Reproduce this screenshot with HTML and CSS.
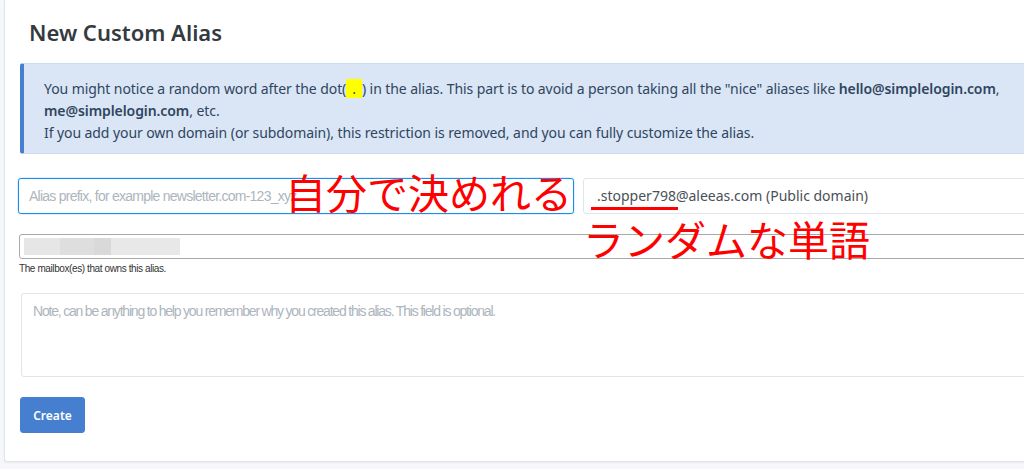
FILE: index.html
```html
<!DOCTYPE html>
<html lang="ja">
<head>
  <meta charset="UTF-8">
  <meta name="viewport" content="width=device-width, initial-scale=1.0">
  <title>New Custom Alias</title>
  <link rel="stylesheet" href="styles.css">
</head>
<body>
  <div class="card">
    <h1 class="card-title">New Custom Alias</h1>

    <div class="alert">
      You might notice a random word after the dot(<span class="mark">.</span>) in the alias. This part is to avoid a person taking all the "nice" aliases like <b>hello@simplelogin.com</b>, <b>me@simplelogin.com</b>, etc.<br>
      If you add your own domain (or subdomain), this restriction is removed, and you can fully customize the alias.
    </div>

    <form class="alias-form">
      <div class="alias-row">
        <input type="text" class="prefix" placeholder="Alias prefix, for example newsletter.com-123_xyz">
        <div class="suffix">
          <span class="word">.stopper798</span>@aleeas.com (Public domain)
        </div>
        <span class="note note-self">自分で決めれる</span>
        <span class="note note-random">ランダムな単語</span>
      </div>

      <div class="mailbox">
        <span class="blur b1"></span><span class="blur b2"></span><span class="blur b3"></span><span class="blur b4"></span>
      </div>
      <div class="help">The mailbox(es) that owns this alias.</div>

      <textarea class="memo" placeholder="Note, can be anything to help you remember why you created this alias. This field is optional."></textarea>

      <button type="button" class="btn">Create</button>
    </form>
  </div>
</body>
</html>
```

FILE: styles.css
```css
* {
  box-sizing: border-box;
}
body {
  margin: 0;
  background-color: #f5f7fb;
  font-family: 'Segoe UI', 'Noto Sans', sans-serif;
  color: #495057;
  overflow: hidden;
  height: 469px;
}

.card {
  margin-left: 4px;
  width: 1060px;
  height: 462px;
  background: #fff;
  border: 1px solid rgba(0, 40, 100, .12);
  border-top: 0;
  border-radius: 0 0 3px 3px;
  box-shadow: 0 1px 2px rgba(0, 0, 0, .05);
  padding: 19px 15px 0 15px;
}

.card-title {
  margin: 0 0 18px 9px;
  font-size: 22px;
  font-weight: 600;
  color: #343a40;
  line-height: 26px;
}

.alert {
  background-color: #dae5f5;
  border: 1px solid #cbdbf2;
  border-left: 4px solid #467fcf;
  border-radius: 3px;
  padding: 14px 20px;
  font-size: 14px;
  line-height: 22px;
  letter-spacing: -0.08px;
  color: #2f4560;
  height: 91px;
  margin-bottom: 24px;
}

.alert b {
  font-weight: 600;
}

.mark {
  background: #ffff00;
  padding: 0 6px;
}

.alias-row {
  position: relative;
  display: flex;
  gap: 9px;
  margin-left: -2px;
  margin-bottom: 20px;
}

.prefix {
  width: 556px;
  height: 36px;
  border: 1px solid #1991eb;
  border-radius: 3px;
  padding: 6px 10px;
  font-family: 'Liberation Sans', sans-serif;
  font-size: 14px;
  letter-spacing: -0.75px;
  outline: none;
  box-shadow: 0 0 0 1px rgba(25, 145, 235, .15);
}

.prefix::placeholder {
  color: #adb5bd;
}

.suffix {
  flex: 1;
  height: 36px;
  border: 1px solid #e0e5ec;
  border-radius: 3px;
  padding: 7px 13px;
  font-size: 14px;
  color: #495057;
  line-height: 20px;
}

.word {
  position: relative;
}

.word::after {
  content: "";
  position: absolute;
  left: -6px;
  width: 87px;
  bottom: -5px;
  height: 3px;
  background: #ff0000;
}

.note {
  position: absolute;
  font-family: 'Noto Sans CJK JP', sans-serif;
  font-size: 41px;
  line-height: 41px;
  color: #ff0000;
  white-space: nowrap;
}

.note-self {
  left: 267px;
  top: -7px;
}

.note-random {
  left: 565px;
  top: 40px;
}

.mailbox {
  margin-left: -1px;
  height: 25px;
  border: 1px solid #a9a9a9;
  border-radius: 3px;
  padding: 3px 4px;
  display: flex;
}

.blur {
  display: block;
  height: 17px;
}

.b1 { width: 36px; background: #e6e6e6; }
.b2 { width: 34px; background: #dedede; }
.b3 { width: 17px; background: #d9d9d9; }
.b4 { width: 69px; background: #e8e8e8; }

.help {
  margin-left: -1px;
  font-family: 'Liberation Sans', sans-serif;
  font-size: 10px;
  letter-spacing: -0.4px;
  color: #333;
  line-height: 20px;
  margin-bottom: 14px;
}

.memo {
  display: block;
  margin-left: 1px;
  width: 1040px;
  height: 84px;
  border: 1px solid #e0e5ec;
  border-radius: 3px;
  padding: 9px 11px;
  font-family: 'Liberation Sans', sans-serif;
  font-size: 14px;
  letter-spacing: -1.2px;
  resize: none;
  margin-bottom: 20px;
}

.memo::placeholder {
  color: #adb5bd;
}

.btn {
  width: 65px;
  height: 36px;
  background-color: #467fcf;
  color: #fff;
  border: 1px solid #467fcf;
  border-radius: 3px;
  font-family: inherit;
  font-size: 12px;
  font-weight: 600;
  cursor: pointer;
}
```
